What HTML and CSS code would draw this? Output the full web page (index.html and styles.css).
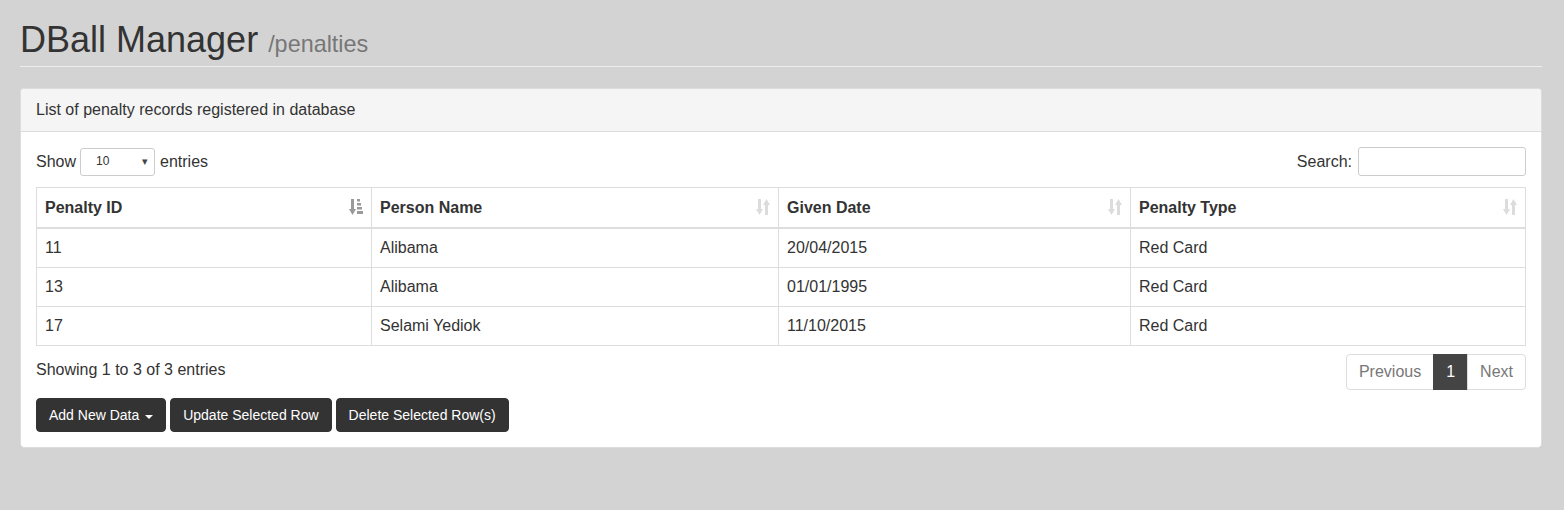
FILE: index.html
```html
<!DOCTYPE html>
<html>
<head>
<meta charset="utf-8">
<title>DBall Manager</title>
<link rel="stylesheet" href="styles.css">
</head>
<body>
<div class="container">
  <div class="page-header">
    <h1>DBall Manager <small>/penalties</small></h1>
  </div>
  <div class="panel">
    <div class="panel-heading">List of penalty records registered in database</div>
    <div class="panel-body">
      <div class="controls">
        <label class="length">Show
          <span class="select"><span class="select-val">10</span><span class="caret-sm">&#9662;</span></span>
          entries</label>
        <label class="search">Search: <input type="text" class="search-input"></label>
      </div>
      <table class="data">
        <colgroup>
          <col class="c1"><col class="c2"><col class="c3"><col class="c4">
        </colgroup>
        <thead>
          <tr>
            <th><span>Penalty ID</span>
              <svg class="sort active" width="14" height="16" viewBox="0 0 14 16"><rect x="2" y="0" width="3" height="11"/><polygon points="0,10 7,10 3.5,16"/><rect x="8" y="0" width="3" height="2.5"/><rect x="8" y="4" width="4" height="2.5"/><rect x="8" y="8" width="5" height="2.5"/><rect x="8" y="12" width="6" height="3"/></svg>
            </th>
            <th><span>Person Name</span>
              <svg class="sort" width="14" height="16" viewBox="0 0 14 16"><rect x="2" y="0" width="3" height="11"/><polygon points="0,10 7,10 3.5,16"/><rect x="9" y="5" width="3" height="11"/><polygon points="7,6 14,6 10.5,0"/></svg>
            </th>
            <th><span>Given Date</span>
              <svg class="sort" width="14" height="16" viewBox="0 0 14 16"><rect x="2" y="0" width="3" height="11"/><polygon points="0,10 7,10 3.5,16"/><rect x="9" y="5" width="3" height="11"/><polygon points="7,6 14,6 10.5,0"/></svg>
            </th>
            <th><span>Penalty Type</span>
              <svg class="sort" width="14" height="16" viewBox="0 0 14 16"><rect x="2" y="0" width="3" height="11"/><polygon points="0,10 7,10 3.5,16"/><rect x="9" y="5" width="3" height="11"/><polygon points="7,6 14,6 10.5,0"/></svg>
            </th>
          </tr>
        </thead>
        <tbody>
          <tr><td>11</td><td>Alibama</td><td>20/04/2015</td><td>Red Card</td></tr>
          <tr><td>13</td><td>Alibama</td><td>01/01/1995</td><td>Red Card</td></tr>
          <tr><td>17</td><td>Selami Yediok</td><td>11/10/2015</td><td>Red Card</td></tr>
        </tbody>
      </table>
      <div class="footer-row">
        <div class="info">Showing 1 to 3 of 3 entries</div>
        <ul class="pagination">
          <li class="disabled"><a>Previous</a></li>
          <li class="active"><a>1</a></li>
          <li class="disabled"><a>Next</a></li>
        </ul>
      </div>
      <div class="actions">
        <button class="btn">Add New Data <span class="caret"></span></button>
        <button class="btn">Update Selected Row</button>
        <button class="btn">Delete Selected Row(s)</button>
      </div>
    </div>
  </div>
</div>
</body>
</html>
```
FILE: styles.css
```css
* { box-sizing: border-box; }
html, body { margin: 0; padding: 0; }
body {
  background: #d3d3d3;
  font-family: "Liberation Sans", Arial, sans-serif;
  font-size: 16px;
  line-height: 1.42857;
  color: #333;
}
.container { padding: 0 22px 0 20px; }
.page-header {
  padding-bottom: 6px;
  border-bottom: 1px solid #eee;
  margin-bottom: 21px;
}
.page-header h1 {
  margin: 20px 0 0;
  font-size: 36px;
  font-weight: 500;
  line-height: 39.6px;
  color: #333;
}
.page-header h1 small {
  font-size: 65%;
  line-height: 1;
  color: #777;
  font-weight: 400;
}
.panel {
  background: #fff;
  border: 1px solid #ddd;
  border-radius: 4px;
  box-shadow: 0 1px 1px rgba(0,0,0,.05);
}
.panel-heading {
  background: #f5f5f5;
  border-bottom: 1px solid #ddd;
  padding: 10px 15px;
  border-radius: 3px 3px 0 0;
}
.panel-body { padding: 15px; }
.controls {
  display: flex;
  justify-content: space-between;
  align-items: center;
  height: 29px;
}
.controls label { display: flex; align-items: center; font-weight: 400; }
.select {
  display: inline-flex;
  align-items: center;
  justify-content: space-between;
  width: 75px;
  height: 28px;
  margin: 0 5px 0 4px;
  padding: 0 6px 0 15px;
  border: 1px solid #ccc;
  border-radius: 3px;
  font-size: 12px;
  color: #333;
}
.caret-sm { font-size: 11px; color: #444; }
.search-input {
  width: 168px;
  height: 29px;
  margin-left: 6px;
  border: 1px solid #ccc;
  border-radius: 3px;
  font-size: 12px;
  padding: 5px 10px;
}
table.data {
  width: 100%;
  margin: 11px 0 6px;
  border-collapse: collapse;
  border: 1px solid #ddd;
}
col.c1 { width: 335px; }
col.c2 { width: 407px; }
col.c3 { width: 352px; }
th, td {
  border: 1px solid #ddd;
  padding: 8px;
  text-align: left;
  vertical-align: middle;
  line-height: 22px;
}
th {
  font-weight: 700;
  border-bottom-width: 2px;
  position: relative;
  padding-right: 30px;
  line-height: 23px;
}
.sort {
  position: absolute;
  right: 8px;
  top: 11px;
  fill: #dcdcdc;
}
.sort.active { fill: #9a9a9a; }
.footer-row {
  display: flex;
  justify-content: space-between;
  align-items: flex-start;
}
.info { padding-top: 7px; }
.pagination {
  display: flex;
  list-style: none;
  margin: 2px 0 0;
  padding: 0;
}
.pagination a {
  display: block;
  padding: 6px 12px;
  line-height: 22px;
  border: 1px solid #ddd;
  margin-left: -1px;
  color: #777;
  background: #fff;
}
.pagination li:first-child a { border-radius: 4px 0 0 4px; margin-left: 0; }
.pagination li:last-child a { border-radius: 0 4px 4px 0; }
.pagination .active a {
  background: #444;
  border-color: #444;
  color: #fff;
}
.actions {
  display: flex;
  gap: 4px;
  margin-top: 8px;
}
.btn {
  font-family: "Liberation Sans", Arial, sans-serif;
  font-size: 14px;
  line-height: 20px;
  padding: 6px 12px;
  border: 1px solid #333;
  border-radius: 4px;
  background: #333;
  color: #fff;
}
.caret {
  display: inline-block;
  width: 0; height: 0;
  margin-left: 2px;
  vertical-align: middle;
  border-top: 4px solid #fff;
  border-left: 4px solid transparent;
  border-right: 4px solid transparent;
}
```
